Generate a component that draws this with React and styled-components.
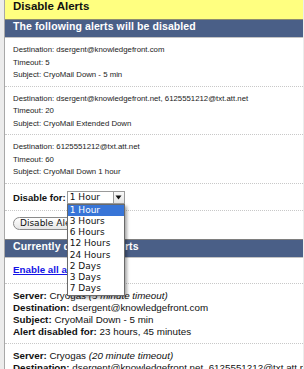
import React from "react";
import styled, { createGlobalStyle } from "styled-components";

const Global = createGlobalStyle`
  html, body { margin: 0; padding: 0; background: #ececec; }
  body { font-family: "Liberation Sans", Arial, sans-serif; }
  * { box-sizing: border-box; }
`;

const Page = styled.div`
  margin: 0 1px 0 4px;
  border-left: 1px solid #a8a8a8;
  background: #fff;
  height: 369px;
  overflow: hidden;
`;

const TitleBar = styled.div`
  height: 20px;
  line-height: 19px;
  background: #ffff80;
  border-bottom: 1px solid #8c8c70;
  padding-left: 8px;
  font: bold 11.5px "Liberation Sans", Arial, sans-serif;
  color: #111;
`;

const SectionHead = styled.div`
  height: ${(p) => (p.$topBorder ? 19 : 18)}px;
  line-height: 17px;
  background: #4a5f87;
  color: #fff;
  border-top: ${(p) => (p.$topBorder ? "1px solid #7e7e7e" : "none")};
  border-bottom: 1px solid #c4c4c4;
  padding-left: 8px;
  font: bold 10.5px "Liberation Sans", Arial, sans-serif;
  letter-spacing: 0.1px;
  white-space: nowrap;
  overflow: hidden;
`;

const SmallItem = styled.div`
  padding: 6px 8px 4px;
  border-bottom: 1px dotted #c8c8c8;
  font-size: 7.8px;
  line-height: 12.55px;
  color: #222;
  white-space: nowrap;
`;

const Row = styled.div`
  display: flex;
  align-items: center;
  padding: ${(p) => p.$pad};
  border-bottom: ${(p) => (p.$noBorder ? "none" : "1px dotted #c8c8c8")};
  position: relative;
`;

const Label = styled.span`
  font: bold 9.6px "Liberation Sans", Arial, sans-serif;
  color: #111;
  margin-right: 1px;
`;

const SelectWrap = styled.div`
  position: relative;
  z-index: 5;
`;

const SelectBox = styled.div`
  display: flex;
  align-items: center;
  width: 58px;
  height: 13px;
  border: 1px solid #9a9a9a;
  background: #fff;
  font: 9px "DejaVu Sans", Verdana, sans-serif;
  color: #111;
`;

const SelectText = styled.span`
  flex: 1;
  padding-left: 2px;
  line-height: 11px;
`;

const ArrowBox = styled.span`
  width: 11px;
  height: 11px;
  border-left: 1px solid #9a9a9a;
  background: linear-gradient(#fafafa, #e4e4e4);
  display: flex;
  align-items: center;
  justify-content: center;
`;

const List = styled.div`
  position: absolute;
  top: 13px;
  left: 0;
  width: 58px;
  border: 1px solid #6a6a6a;
  background: #fff;
  box-shadow: 2px 2px 3px rgba(0, 0, 0, 0.35);
  padding: 0 0 1px;
`;

const Option = styled.div`
  height: 11.2px;
  line-height: 11.2px;
  padding-left: 2px;
  font: 9px "DejaVu Sans", Verdana, sans-serif;
  color: ${(p) => (p.$selected ? "#fff" : "#111")};
  background: ${(p) => (p.$selected ? "#3875d7" : "transparent")};
  white-space: nowrap;
`;

const PillButton = styled.button`
  height: 13px;
  padding: 0 6px;
  border: 1px solid #8a8a8a;
  border-radius: 7px;
  background: linear-gradient(#ffffff, #e6e6e6);
  font: 9px "DejaVu Sans", Verdana, sans-serif;
  color: #111;
  line-height: 11px;
  margin: 0;
`;

const Link = styled.a`
  font: bold 9.8px "Liberation Sans", Arial, sans-serif;
  color: #1414e6;
  text-decoration: underline;
  line-height: 13px;
`;

const BigItem = styled.div`
  padding: 6px 8px 5px;
  border-bottom: 1px dotted #c8c8c8;
  font-size: 9.8px;
  line-height: 12px;
  color: #111;
  white-space: nowrap;
`;

const B = styled.b`
  font-weight: bold;
`;

const I = styled.i`
  font-style: italic;
`;

const Line = styled.div``;

const pending = [
  { dest: "dsergent@knowledgefront.com", timeout: 5, subject: "CryoMail Down - 5 min" },
  { dest: "dsergent@knowledgefront.net, 6125551212@txt.att.net", timeout: 20, subject: "CryoMail Extended Down" },
  { dest: "6125551212@txt.att.net", timeout: 60, subject: "CryoMail Down 1 hour" },
];

const options = ["1 Hour", "3 Hours", "6 Hours", "12 Hours", "24 Hours", "2 Days", "3 Days", "7 Days"];

const disabled = [
  { server: "Cryogas", t: "5 minute timeout", dest: "dsergent@knowledgefront.com", subject: "CryoMail Down - 5 min", forTime: "23 hours, 45 minutes" },
  { server: "Cryogas", t: "20 minute timeout", dest: "dsergent@knowledgefront.net, 6125551212@txt.att.net", subject: "CryoMail Extended Down", forTime: "1 day" },
];

export default function App() {
  return (
    <>
      <Global />
      <Page>
        <TitleBar>Disable Alerts</TitleBar>
        <SectionHead>The following alerts will be disabled</SectionHead>
        {pending.map((a, i) => (
          <SmallItem key={i}>
            <Line>Destination: {a.dest}</Line>
            <Line>Timeout: {a.timeout}</Line>
            <Line>Subject: {a.subject}</Line>
          </SmallItem>
        ))}
        <Row $pad="7px 8px 6px">
          <Label>Disable for:</Label>
          <SelectWrap>
            <SelectBox>
              <SelectText>1 Hour</SelectText>
              <ArrowBox>
                <svg width="7" height="5" viewBox="0 0 7 5">
                  <path d="M0.5 0.5 L6.5 0.5 L3.5 4.5 Z" fill="#111" />
                </svg>
              </ArrowBox>
            </SelectBox>
            <List>
              {options.map((o, i) => (
                <Option key={o} $selected={i === 0}>{o}</Option>
              ))}
            </List>
          </SelectWrap>
        </Row>
        <Row $pad="6px 8px 9px" $noBorder>
          <PillButton>Disable Alerts</PillButton>
        </Row>
        <SectionHead $topBorder>Currently disabled alerts</SectionHead>
        <Row $pad="5px 8px 7px">
          <Link href="#">Enable all alerts</Link>
        </Row>
        {disabled.map((d, i) => (
          <BigItem key={i}>
            <Line><B>Server:</B> {d.server} <I>({d.t})</I></Line>
            <Line><B>Destination:</B> {d.dest}</Line>
            <Line><B>Subject:</B> {d.subject}</Line>
            <Line><B>Alert disabled for:</B> {d.forTime}</Line>
          </BigItem>
        ))}
      </Page>
    </>
  );
}
